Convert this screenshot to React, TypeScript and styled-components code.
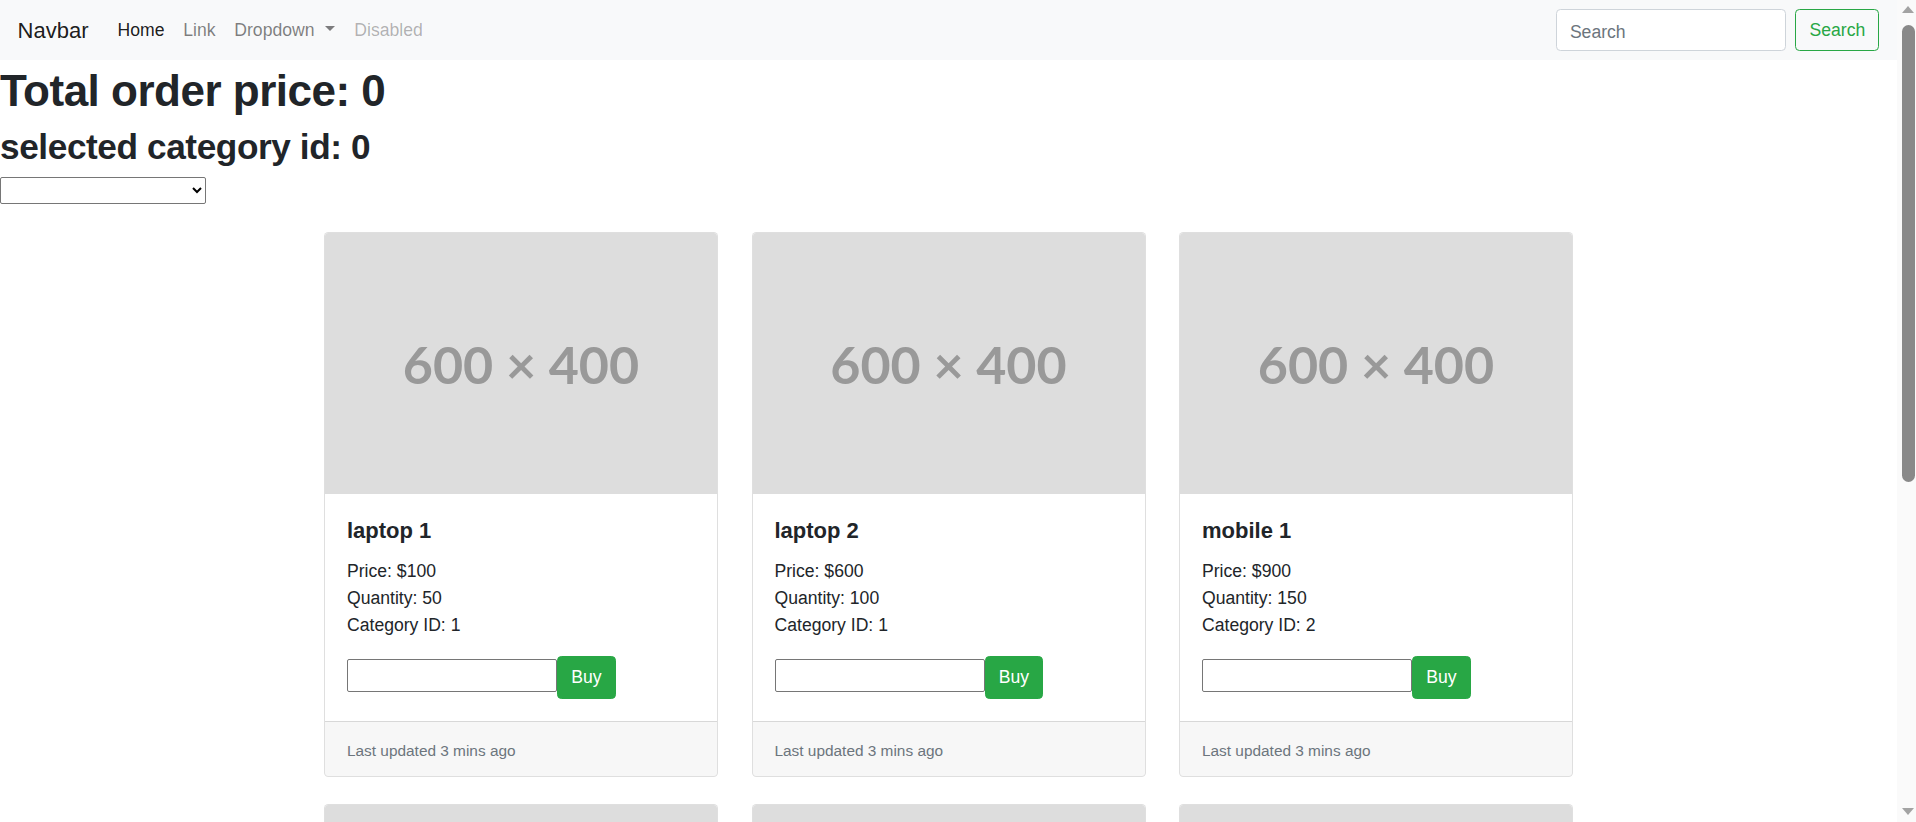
import * as React from "react";
import styled, { createGlobalStyle, css } from "styled-components";

interface Product {
  id: number;
  name: string;
  price: number;
  quantity: number;
  categoryId: number;
}

const products: Product[] = [
  { id: 1, name: "laptop 1", price: 100, quantity: 50, categoryId: 1 },
  { id: 2, name: "laptop 2", price: 600, quantity: 100, categoryId: 1 },
  { id: 3, name: "mobile 1", price: 900, quantity: 150, categoryId: 2 },
  { id: 4, name: "mobile 2", price: 450, quantity: 80, categoryId: 2 },
  { id: 5, name: "tablet 1", price: 300, quantity: 40, categoryId: 3 },
  { id: 6, name: "tablet 2", price: 350, quantity: 60, categoryId: 3 },
];

const TRACK_PAD = 25;

const GlobalStyle = createGlobalStyle`
  * {
    box-sizing: border-box;
  }

  html,
  body {
    margin: 0;
    overflow: hidden;
  }

  body {
    font-family: "Liberation Sans", Arial, sans-serif;
    font-size: 17.6px;
    line-height: 1.5;
    color: #212529;
    background: #fff;
  }
`;

const App = () => {
  const [total] = React.useState(0);
  const [categoryId, setCategoryId] = React.useState(0);
  const contentRef = React.useRef<HTMLDivElement | null>(null);
  const [thumb, setThumb] = React.useState({ top: 0, height: 457 });

  const updateThumb = () => {
    const el = contentRef.current;
    if (!el) return;
    const track = el.clientHeight - TRACK_PAD * 2;
    const height = Math.max(30, (track * el.clientHeight) / el.scrollHeight);
    const top = (el.scrollTop / el.scrollHeight) * track;
    setThumb({ top, height });
  };

  React.useEffect(() => {
    updateThumb();
    window.addEventListener("resize", updateThumb);
    return () => window.removeEventListener("resize", updateThumb);
  }, []);

  return (
    <Shell>
      <GlobalStyle />
      <Content ref={contentRef} onScroll={updateThumb}>
        <NavBar>
          <Brand href="#">Navbar</Brand>
          <NavList>
            <NavLink $state="active" href="#">
              Home
            </NavLink>
            <NavLink href="#">Link</NavLink>
            <DropdownToggle href="#">Dropdown</DropdownToggle>
            <NavLink $state="disabled" href="#">
              Disabled
            </NavLink>
          </NavList>
          <SearchForm onSubmit={(e) => e.preventDefault()}>
            <SearchInput type="search" placeholder="Search" />
            <SearchButton type="submit">Search</SearchButton>
          </SearchForm>
        </NavBar>

        <TotalTitle>Total order price: {total}</TotalTitle>
        <CategoryTitle>selected category id: {categoryId}</CategoryTitle>
        <CategorySelect
          value={categoryId === 0 ? "" : categoryId}
          onChange={(e) => setCategoryId(Number(e.target.value))}
        >
          <option value=""></option>
          <option value={1}>laptops</option>
          <option value={2}>mobiles</option>
          <option value={3}>tablets</option>
        </CategorySelect>

        <CardGrid>
          {products.map((p) => (
            <Card key={p.id}>
              <Placeholder>600 × 400</Placeholder>
              <CardBody>
                <CardTitle>{p.name}</CardTitle>
                <CardLine>Price: ${p.price}</CardLine>
                <CardLine>Quantity: {p.quantity}</CardLine>
                <CardLine>Category ID: {p.categoryId}</CardLine>
                <BuyRow>
                  <QtyInput type="text" />
                  <BuyButton>Buy</BuyButton>
                </BuyRow>
              </CardBody>
              <CardFooter>
                <FooterText>Last updated 3 mins ago</FooterText>
              </CardFooter>
            </Card>
          ))}
        </CardGrid>
      </Content>

      <ScrollTrack aria-hidden>
        <ScrollArrow />
        <ThumbArea>
          <ScrollThumb
            style={{ marginTop: thumb.top, height: thumb.height }}
          />
        </ThumbArea>
        <ScrollArrow $down />
      </ScrollTrack>
    </Shell>
  );
};

const Shell = styled.div`
  display: flex;
  height: 100vh;
`;

const Content = styled.div`
  flex: 1;
  min-width: 0;
  overflow-y: auto;
  scrollbar-width: none;

  &::-webkit-scrollbar {
    display: none;
  }
`;

const ScrollTrack = styled.div`
  display: flex;
  flex-direction: column;
  flex: 0 0 19px;
  background: #fafafa;
`;

const ScrollArrow = styled.div<{ $down?: boolean }>`
  flex: 0 0 ${TRACK_PAD}px;
  display: flex;
  justify-content: center;
  align-items: ${({ $down }) => ($down ? "flex-end" : "flex-start")};
  padding: ${({ $down }) => ($down ? "0 0 7px 3px" : "6px 0 0 3px")};

  &::before {
    content: "";
    width: 0;
    height: 0;
    border-left: 6px solid transparent;
    border-right: 6px solid transparent;
    ${({ $down }) =>
      $down
        ? "border-top: 7px solid #a3a3a3;"
        : "border-bottom: 7px solid #a3a3a3;"}
  }
`;

const ThumbArea = styled.div`
  flex: 1;
  padding: 0 1px 0 5px;
`;

const ScrollThumb = styled.div`
  width: 13px;
  border-radius: 7px;
  background: #898989;
`;

const NavBar = styled.nav`
  display: flex;
  align-items: center;
  height: 60px;
  padding: 0 17.6px;
  background: #f8f9fa;
`;

const Brand = styled.a`
  font-size: 22px;
  line-height: 33px;
  margin-right: 19.6px;
  color: rgba(0, 0, 0, 0.9);
  text-decoration: none;
`;

const NavList = styled.div`
  display: flex;
  align-items: center;
  flex: 1;
`;

const linkColors = {
  active: "rgba(0, 0, 0, 0.9)",
  normal: "rgba(0, 0, 0, 0.5)",
  disabled: "rgba(0, 0, 0, 0.3)",
};

const NavLink = styled.a<{ $state?: "active" | "normal" | "disabled" }>`
  padding: 0 9.4px;
  font-size: 17.6px;
  line-height: 26.4px;
  text-decoration: none;
  color: ${({ $state = "normal" }) => linkColors[$state]};
`;

const DropdownToggle = styled(NavLink)`
  &::after {
    content: "";
    display: inline-block;
    margin-left: 11px;
    vertical-align: 0.255em;
    border-top: 0.3em solid;
    border-right: 0.3em solid transparent;
    border-left: 0.3em solid transparent;
  }
`;

const SearchForm = styled.form`
  display: flex;
  align-items: center;
  gap: 9.6px;
`;

const controlBase = css`
  height: 41.8px;
  padding: 6.6px 13.2px;
  font-family: inherit;
  font-size: 17.6px;
  line-height: 1.5;
  border-radius: 4.4px;
`;

const SearchInput = styled.input`
  ${controlBase}
  width: 230px;
  padding-top: 9px;
  padding-bottom: 4.2px;
  border: 1px solid #ced4da;
  background: #fff;
  color: #495057;

  &::placeholder {
    color: #6c757d;
  }
`;

const SearchButton = styled.button`
  ${controlBase}
  border: 1px solid #28a745;
  background: transparent;
  color: #28a745;
`;

const TotalTitle = styled.h1`
  margin: 0 0 4px;
  font-size: 44px;
  line-height: 62px;
  font-weight: 700;
  letter-spacing: -0.5px;
`;

const CategoryTitle = styled.h2`
  margin: 0 0 9px;
  font-size: 35.2px;
  line-height: 42.24px;
  font-weight: 700;
  letter-spacing: -0.4px;
`;

const CategorySelect = styled.select`
  display: block;
  width: 206px;
  height: 27px;
  font-family: inherit;
  font-size: 15px;
  border: 1px solid #767676;
  border-radius: 2px;
  background: #fff;
`;

const CardGrid = styled.div`
  display: grid;
  grid-template-columns: repeat(3, 394px);
  column-gap: 33.5px;
  row-gap: 27px;
  width: 1249px;
  margin: 28px auto 41px;
`;

const Card = styled.div`
  display: flex;
  flex-direction: column;
  border: 1px solid rgba(0, 0, 0, 0.125);
  border-radius: 4.4px;
  overflow: hidden;
  background: #fff;
`;

const Placeholder = styled.div`
  display: flex;
  align-items: center;
  justify-content: center;
  height: 261px;
  background: #dddddd;
  color: #999999;
  font-family: Lato, "Liberation Sans", sans-serif;
  font-size: 52px;
  font-weight: 700;
`;

const CardBody = styled.div`
  padding: 22px;
`;

const CardTitle = styled.h5`
  margin: 0 0 10.6px;
  font-size: 22px;
  line-height: 30.8px;
  font-weight: 700;
`;

const CardLine = styled.div`
  line-height: 27px;
`;

const BuyRow = styled.div`
  display: flex;
  align-items: flex-start;
  margin-top: 17.6px;
`;

const QtyInput = styled.input`
  width: 210px;
  height: 33px;
  margin-top: 3px;
  padding: 1px 4px;
  font-family: inherit;
  font-size: 15px;
  border: 1px solid #767676;
  border-radius: 2px;
`;

const BuyButton = styled.button`
  height: 43px;
  padding: 0 13.2px;
  font-family: inherit;
  font-size: 17.6px;
  color: #fff;
  background: #28a745;
  border: 1px solid #28a745;
  border-radius: 4.4px;
`;

const CardFooter = styled.div`
  padding: 17px 22px 14px;
  background: rgba(0, 0, 0, 0.03);
  border-top: 1px solid rgba(0, 0, 0, 0.125);
`;

const FooterText = styled.small`
  display: block;
  font-size: 15.4px;
  line-height: 23.1px;
  color: #6c757d;
`;

export default App;
